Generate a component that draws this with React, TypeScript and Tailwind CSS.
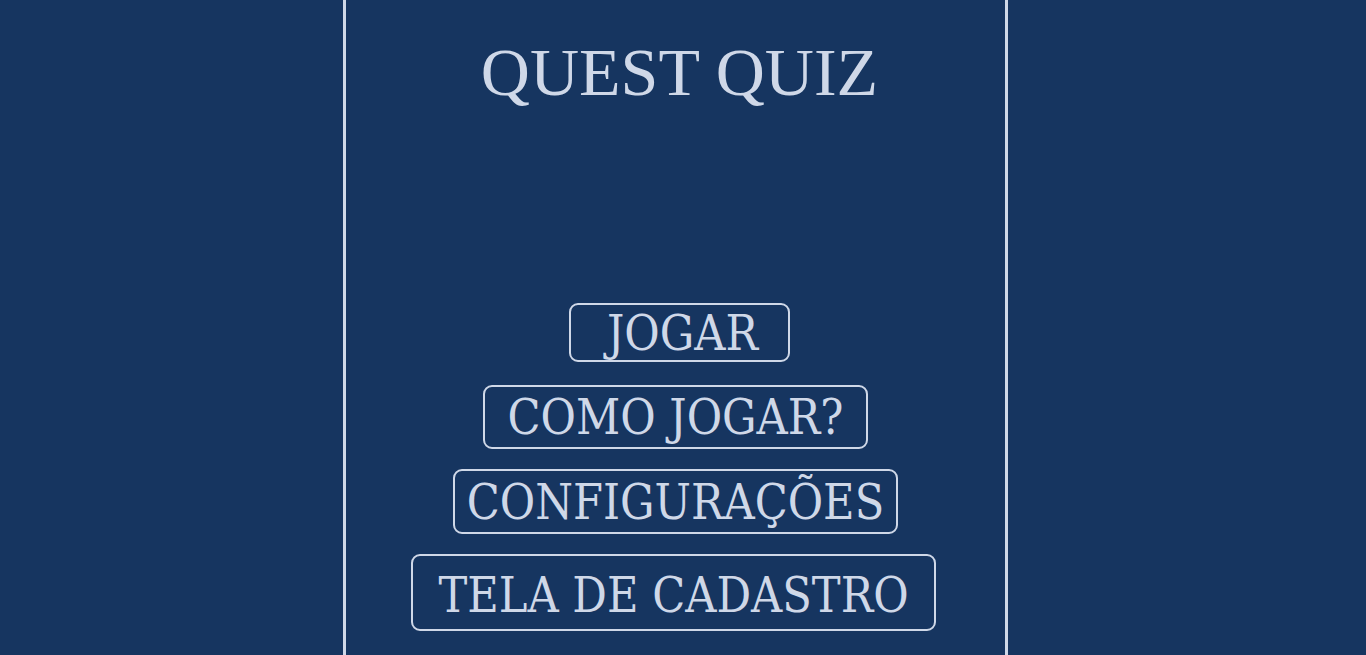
import React from 'react';

const menu = [
  { label: 'JOGAR', cls: 'pl-[36px] pr-[30px] h-[59px] ml-[8px]' },
  { label: 'COMO JOGAR?', cls: 'px-[23px] h-[64px] mt-[23px]' },
  { label: 'CONFIGURAÇÕES', cls: 'px-[12px] h-[65px] mt-[20px]' },
  { label: 'TELA DE CADASTRO', cls: 'px-[25px] h-[77px] pt-[4px] mt-[20px] -ml-[4px]' },
];

const App: React.FC = () => {
  return (
    <div className="min-h-[655px] h-screen bg-[#163560] overflow-hidden">
      <div className="ml-[343px] w-[665px] h-full border-x-[3px] border-[#cfd8e8] flex flex-col items-center">
        <h1 className="mt-[36px] ml-[8px] text-[#cfd8e8] text-[68px] leading-[72px] font-['Liberation_Serif',serif]">
          QUEST QUIZ
        </h1>
        <div className="mt-[195px] flex flex-col items-center">
          {menu.map(item => (
            <button
              key={item.label}
              className={`${item.cls} border-2 border-[#cfd8e8] rounded-[9px] text-[#cfd8e8] text-[48px] leading-none font-['DejaVu_Serif_Condensed','DejaVu_Serif',serif] flex items-center justify-center`}
            >
              {item.label}
            </button>
          ))}
        </div>
      </div>
    </div>
  );
};

export default App;
